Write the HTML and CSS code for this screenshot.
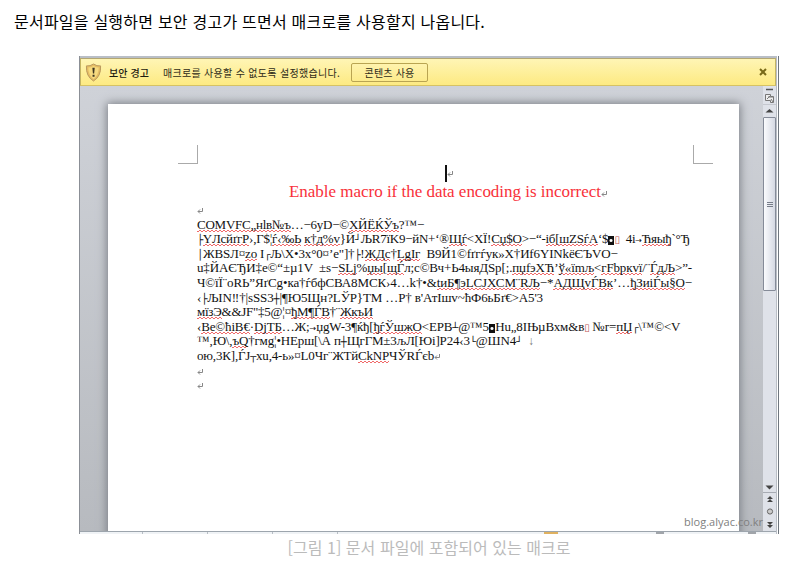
FILE: index.html
```html
<!DOCTYPE html>
<html lang="ko">
<head>
<meta charset="utf-8">
<title>매크로 보안 경고</title>
<link rel="stylesheet" href="styles.css">
</head>
<body>
<svg width="0" height="0" class="defs"><symbol id="ret" viewBox="0 0 6 7"><path d="M5.500 1v3.500H1M3 2.500l-2 2 2 2" fill="none" stroke="#888"/></symbol></svg>
<p class="intro">문서파일을 실행하면 보안 경고가 뜨면서 매크로를 사용할지 나옵니다.</p>
<figure class="figure">
<div class="word">
  <div class="warning">
    <svg class="shield" width="17" height="19" viewBox="0 0 18 20"><path d="M9 1 Q5.500 3.500 1.500 3 Q.8 14 9 19 Q17.200 14 16.500 3 Q12.500 3.500 9 1Z" fill="#e5bd62" stroke="#b8965c"/><path d="M9 3Q6 5 3.500 4.800 3.500 13 9 17 14.500 13 14.500 4.800 12 5 9 3Z" fill="#f6da80"/><path d="M7.800 5h2.500l-.6 6H8.400zM8 12.300h2.100v2.100H8z" fill="#3d3520"/></svg>
    <b class="title">보안 경고</b>
    <span class="message">매크로를 사용할 수 없도록 설정했습니다.</span>
    <span class="button">콘텐츠 사용</span>
    <svg class="close" width="8" height="8" viewBox="0 0 8 8"><path d="M1 1l6 6M7 1L1 7" stroke="#796a19" stroke-width="2"/></svg>
  </div>
  <div class="workspace">
    <div class="page">
      <div class="margins"><i class="corner left"></i><i class="corner right"></i></div>
      <div class="caret-row"><i class="caret"></i><svg class="ret"><use href="#ret"/></svg></div>
      <h1 class="heading">Enable macro if the data encoding is incorrect<svg class="ret"><use href="#ret"/></svg></h1>
      <div class="body">
        <div class="line"><svg class="ret"><use href="#ret"/></svg></div>
        <div class="line l1"><u>COMVFC„нlв№ъ</u>…−6yD−©<u>ХЙЁЌЎъ</u>?™−</div>
        <div class="line l2"><i class="box">├</i><u>ҮЛсйґгР</u>›,Г$¦<u>ѓ‹‰Ь</u> <u>к†д%v</u>}Й<i class="box">┘</i>ЉR7їK9−йN+‘®<u>Щѓ</u>&lt;XЇ!<u>Сџ$О</u>&gt;−“-<u>іб[шZSѓА</u>‘$<i class="solid">◘</i><span class="missing">▯</span>&nbsp; 4і<i class="arrow">→</i><u>Ћяыђ</u>`°Ђ</div>
        <div class="line l3"><i class="box">│</i>ЖВЅЛ¤<u>zо</u> I<i class="box">┌</i>Љ\Х•3х°0¤’е"]†<i class="box">├</i>!<u>ЖДс</u>†<u>LgIг</u>&nbsp; В9Й1©fґгѓук»Х†Иf6YІNkёЄЪVО−</div>
        <div class="line l4">u‡ЙАЄЂИ‡е©“±µ1V&nbsp; ±s−<u>SLj</u>%<u>џы</u>[<u>щЃ</u>л;с©Вч+Ь4ыяДЅр[;.<u>пџfэХЋ</u>’<u>ў«їmљ</u>&lt;<u>гFbркvї</u>/¨<u>ЃдЉ</u>&gt;”-</div>
        <div class="line l5">Ч©їЇ¨оRЬ”ЯґСg•ка†ѓбфСВА8МСК›4…k†•&amp;<u>tиБ¶эLСЈХСМ¨RЉ</u>−*<u>АДЩvЃВк</u>’…<u>ђЗиіЃы§О</u>−</div>
        <div class="line l6">‹<i class="box">├</i>ЉІN‼†|sSS3<i class="box">┼</i>|¶Ю5Щн?LЎР}TM …Р† в'АтІшv~ћФ6ьБґ€&gt;А5'3</div>
        <div class="line l7"><u>мїзЭ</u>&amp;&amp;JF"‡5@¦¤<u>ђМ¶ЃВ</u>†¨<u>ЖкъИ</u></div>
        <div class="line l8">‹<u>Ве©ћіВ€</u>·<u>DjТБ</u>…Ж;<i class="arrow">→</i>џgW-3¶ќђ[<u>ђѓЎшжО</u>&lt;ЕРВ<i class="box">┴</i>@™5<i class="solid">◘</i>Нu„8ІЊµВхм&amp;в<span class="missing">▯</span> №r=<u>пЏ</u><i class="box">┌</i>\™©&lt;V</div>
        <div class="line l9">™,Ю\,<u>ъQ</u>†гмg¦•НЕрш[\А п<i class="box">┼</i>ЩгГМ±3љЛ[Юі]Р24‹3<i class="box">└</i>@ШN4<i class="box">┘</i> <span class="down">↓</span></div>
        <div class="line l10">ою,3К],ЃЈ<i class="box">┬</i>хu,4-ь»¤L0Чг¨ЖТй<u>CkNР</u>ЧЎRЃєb<svg class="ret"><use href="#ret"/></svg></div>
        <div class="line"><svg class="ret"><use href="#ret"/></svg></div>
        <div class="line"><svg class="ret"><use href="#ret"/></svg></div>
      </div>
    </div>
    <div class="scrollbar">
      <svg class="tools" width="13" height="31" viewBox="0 0 13 31"><path d="M3 3.500h7" stroke="#555" stroke-width="1.500"/><path d="M2.500 8.500h5v2h3v6h-3v-2h-5zM5 11h5M4 13l3-3M8 13l2 3" fill="#eee" stroke="#777"/><path d="M0 18.500h13" stroke="#c5c8cf"/><path d="M2.500 26.500L6.500 23l4 3.500z" fill="#444"/></svg>
      <div class="thumb"><i></i><i></i><i></i></div>
      <svg class="nav" width="13" height="49" viewBox="0 0 13 49"><path d="M2.500 3.500h8l-4 4z" fill="#444"/><path d="M0 10.500h13" stroke="#a7abb3"/><path d="M4 17l3-3 3 3zM4 20l3-3 3 3zM4 40h6l-3 3zM4 43h6l-3 3z" fill="#444"/><circle cx="7" cy="29.500" r="2.600" fill="#ccc" stroke="#666"/></svg>
    </div>
  </div>
  <div class="status"><i class="tick"></i><i class="tick"></i><i class="tick"></i><i class="tick"></i><i class="view"></i><i class="knob"></i><i class="knob"></i></div>
  <span class="watermark">blog.alyac.co.kr</span>
</div>
<figcaption class="caption">[그림 1] 문서 파일에 포함되어 있는 매크로</figcaption>
</figure>
</body>
</html>
```
FILE: styles.css
```css
* { box-sizing: border-box; }
body { margin: 0; background: #fff; width: 789px; height: 568px; overflow: hidden; font-family: "Noto Sans CJK KR", sans-serif; }
.defs { position: absolute; }
.intro { margin: 0; padding: 9px 0 0 14px; height: 56px; font-size: 16px; line-height: 25px; letter-spacing: .224px; color: #000; white-space: nowrap; }
.figure { margin: 0 0 0 79px; width: 700px; }

.word { position: relative; height: 478px; padding-right: 2px; display: flex; flex-direction: column; background: #b9bec6; border-left: 1px solid #8b8f96; border-right: 1px solid #6f767e; box-shadow: inset -1px 0 #fff; }
.warning { flex: none; height: 28px; margin-top: 2px; padding: 0 8px 0 4px; display: flex; align-items: center; background: linear-gradient(#fff5b5, #fdea82); border: 1px solid #b9a75a; border-color: #b3a774 #c4b463 #d6c264; font-size: 10px; color: #2e2b18; white-space: nowrap; }
.title { margin-left: 7px; width: 54px; color: #1c1a10; font-weight: 500; letter-spacing: .078px; }
.message { width: 188px; letter-spacing: .3px; }
.button { width: 77px; height: 19px; line-height: 17px; text-align: center; border: 1px solid #b9a452; border-radius: 2px; background: linear-gradient(#fff3ad, #fdeb8b); letter-spacing: .2px; }
.close { margin-left: auto; }

.workspace { flex: none; height: 445px; display: flex; justify-content: space-between; padding-left: 28px; background: linear-gradient(#cfd2d8, #b7babf); overflow: hidden; }
.page { width: 631px; height: 440px; margin-top: 18px; padding-top: 41px; background: #fff; box-shadow: 0 0 9px 1px #787c83; }
.margins { height: 19px; padding: 0 26px 0 70px; display: flex; justify-content: space-between; }
.corner { width: 20px; height: 19px; border: 0 solid #aaa; border-bottom-width: 1px; }
.left { border-right-width: 1px; }
.right { border-left-width: 1px; }
.caret-row { height: 18px; padding-left: 337px; display: flex; align-items: center; }
.caret { width: 2px; height: 17px; background: #111; }
.ret { width: 6px; height: 7px; }
.heading { margin: 0; padding-left: 181px; font: 17px/20px "Liberation Serif", serif; letter-spacing: -.021px; color: #f8313a; white-space: nowrap; }
.body { padding: 1px 0 0 89px; font: 13px/14.600px "Liberation Serif", "DejaVu Serif", serif; color: #111; }
.line { height: 14.600px; white-space: nowrap; }
.line u { text-decoration: none; background: repeating-linear-gradient(90deg, #f06a6a 0 2px, transparent 2px 4px) 0 100% / 100% 1px no-repeat, repeating-linear-gradient(90deg, transparent 0 2px, #f06a6a 2px 4px) 0 calc(100% - 1px) / 100% 1px no-repeat; }
.box { font: 10px/1 "DejaVu Sans Mono", monospace; }
.arrow { font: 8px/1 "DejaVu Sans", sans-serif; }
.solid { font: 8px/1 "DejaVu Sans", sans-serif; background: radial-gradient(circle, #fff 1px, #111 2px); color: transparent; }
.down { font-size: 12px; margin-left: 3px; color: #777; }
.missing { font-size: 10px; color: #b55; }
.l1 { letter-spacing: -.237px; }
.l2 { letter-spacing: -.25px; }
.l3 { letter-spacing: -.146px; }
.l4 { letter-spacing: -.138px; }
.l5 { letter-spacing: -.111px; }
.l6 { letter-spacing: -.12px; }
.l7 { letter-spacing: -.253px; }
.l8 { letter-spacing: -.15px; }
.l9 { letter-spacing: -.16px; }
.l10 { letter-spacing: -.18px; }

.scrollbar { width: 13px; display: flex; flex-direction: column; background: #dfe2e9; }
.tools, .nav { flex: none; display: block; }
.thumb { height: 174px; margin-bottom: auto; display: flex; flex-direction: column; align-items: center; justify-content: center; gap: 1px; border: 1px solid #858b98; border-radius: 1px; background: linear-gradient(90deg, #fafbfd, #d5d9e3); }
.thumb i { width: 6px; height: 1px; background: #777d89; }
.status { height: 3px; padding-left: 62px; display: flex; background: #f0f3f6; border-top: 1px solid #9da5ad; }
.tick { width: 65px; border-left: 1px solid #b8bec5; }
.view { width: 14px; margin-left: 142px; background: #dfb160; }
.knob { width: 8px; margin-left: 98px; background: #a1a5aa; }
.knob + .knob { margin-left: 84px; }
.watermark { position: absolute; left: 604px; top: 458px; font: 11px/16px "Open Sans", sans-serif; letter-spacing: .02px; color: #808080; }
.caption { text-align: center; color: #bbb; font-size: 16px; line-height: 26px; letter-spacing: .036px; }
```
